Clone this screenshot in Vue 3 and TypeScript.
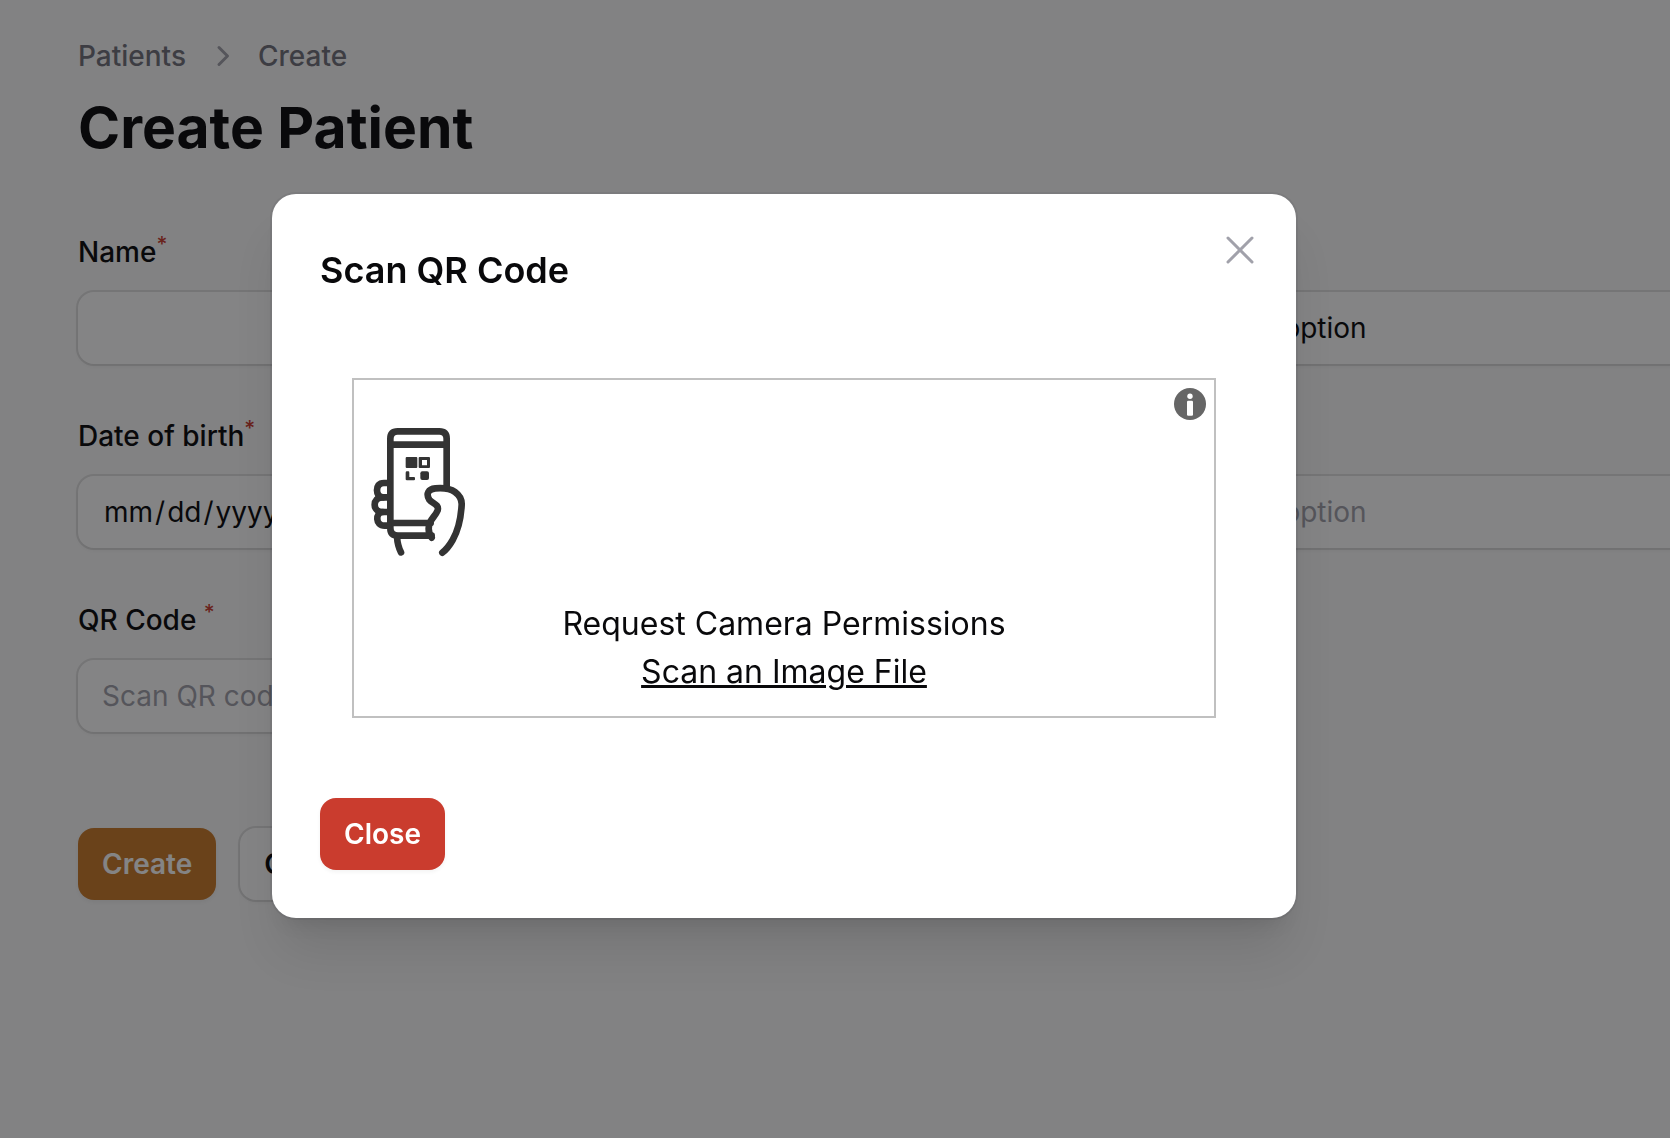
<script setup lang="ts">
import { ref } from 'vue'

const name = ref('')
const type = ref('')
const owner = ref('')
const birthDate = ref('')
const qrCode = ref('')
const scannerOpen = ref(true)
</script>

<template>
  <main class="page">
    <nav class="breadcrumbs" aria-label="Breadcrumb">
      <a href="#patients">Patients</a>
      <svg class="chevron" viewBox="0 0 40 40" aria-hidden="true">
        <path d="M17 11.5 25.5 20 17 28.5" />
      </svg>
      <a href="#create">Create</a>
    </nav>
    <h1 class="heading">Create Patient</h1>

    <form class="form" @submit.prevent>
      <div class="fields">
        <div class="field">
          <label for="name">Name<sup>*</sup></label>
          <input id="name" v-model="name" class="control" type="text" />
        </div>
        <div class="field">
          <label for="type">Type<sup>*</sup></label>
          <select id="type" v-model="type" class="control">
            <option value="">Select an option</option>
            <option value="cat">Cat</option>
            <option value="dog">Dog</option>
            <option value="rabbit">Rabbit</option>
          </select>
        </div>
        <div class="field">
          <label for="birth">Date of birth<sup>*</sup></label>
          <input id="birth" v-model="birthDate" class="control" type="date" />
        </div>
        <div class="field">
          <label for="owner">Owner<sup>*</sup></label>
          <select id="owner" v-model="owner" class="control muted">
            <option value="">Select an option</option>
          </select>
        </div>
        <div class="field">
          <label for="qr">QR Code <sup>*</sup></label>
          <input id="qr" v-model="qrCode" class="control" type="text" placeholder="Scan QR code" />
        </div>
      </div>
      <div class="actions">
        <button class="btn primary" type="submit">Create</button>
        <button class="btn outline" type="button">Create &amp; create another</button>
      </div>
    </form>
  </main>

  <div v-if="scannerOpen" class="overlay">
    <section class="modal" role="dialog" aria-modal="true" aria-labelledby="scan-title">
      <button class="dismiss" type="button" aria-label="Close dialog" @click="scannerOpen = false">
        <svg viewBox="0 0 48 48" aria-hidden="true"><path d="M12 12 36 36M36 12 12 36" /></svg>
      </button>
      <h2 id="scan-title" class="modal-title">Scan QR Code</h2>

      <div class="reader">
        <svg class="info" viewBox="0 0 32 32" aria-hidden="true">
          <circle cx="16" cy="16" r="16" fill="#666" />
          <circle cx="16" cy="8.3" r="2.7" fill="#fff" />
          <rect x="13" y="12.7" width="6" height="15" rx="1.2" fill="#fff" />
        </svg>
        <svg class="phone" viewBox="60 171 288 390" aria-hidden="true">
          <g class="strokes">
            <path d="M290 350V206Q290 184 268 184H143Q121 184 121 206V474Q121 497 144 497H245" />
            <path d="M121 224H290M121 459H242" />
            <path d="M114 339H102C86 339 81 349 81 361C81 374 87 382 100 382" />
            <path d="M114 382H98C66 382 66 426 98 426H114" />
            <path d="M98 426C76 428 75 467 104 467H116" />
            <path d="M141 500C142 517 146 534 153 547" />
            <path d="M245 503C236 490 233 474 240 457C247 443 258 434 263 421C268 403 247 401 238 389C227 371 235 357 256 355C278 353 300 355 315 366C330 377 336 389 335 405C333 440 325 480 308 510C300 524 290 538 277 548" />
          </g>
          <rect x="167" y="261" width="35" height="33" rx="3" />
          <path fill-rule="evenodd" d="M210 261H237Q240 261 240 264V291Q240 294 237 294H209Q206 294 206 291V264Q206 261 209 261ZM216 270V286H231V270Z" />
          <path d="M167 308Q167 304 171 304H175Q178 304 178 308V321H192Q195 321 195 324V328Q195 331 192 331H171Q167 331 167 328Z" />
          <rect x="211" y="304" width="26" height="26" rx="6" />
        </svg>
        <button class="reader-action" type="button">Request Camera Permissions</button>
        <a class="reader-action file" href="#file">Scan an Image File</a>
      </div>

      <button class="btn danger" type="button" @click="scannerOpen = false">Close</button>
    </section>
  </div>
</template>

<style>
body {
  background: #fafafa;
}
</style>

<style scoped>
.page,
.overlay {
  font-family: Inter, "Liberation Sans", sans-serif;
  font-size: 28px;
  line-height: 40px;
  color: #09090b;
}

.page {
  box-sizing: border-box;
  min-height: 100vh;
  padding: 36px 0 48px 78px;
  overflow: hidden;
  background: #fafafa;
}

.breadcrumbs {
  display: flex;
  align-items: center;
  gap: 16px;
}

.breadcrumbs a {
  color: #71717a;
  font-weight: 500;
  text-decoration: none;
}

.chevron {
  width: 40px;
  height: 40px;
  fill: none;
  stroke: #a1a1aa;
  stroke-width: 3;
  stroke-linecap: round;
  stroke-linejoin: round;
}

.heading {
  margin: 16px 0 64px;
  font-size: 57px;
  line-height: 72px;
  font-weight: 700;
}

/* The form runs on past the right edge of the window. */
.form {
  width: 129%;
}

.fields {
  display: grid;
  grid-template-columns: repeat(2, minmax(0, 1fr));
  gap: 48px;
}

.field {
  display: flex;
  flex-direction: column;
  gap: 16px;
}

.field label {
  font-weight: 500;
  line-height: 48px;
  white-space: pre-wrap;
}

sup {
  color: #ca3c2e;
  font-size: 21px;
  line-height: 0;
}

.control {
  box-sizing: border-box;
  width: 100%;
  height: 72px;
  padding: 0 24px;
  border: 0;
  border-radius: 16px;
  outline: 0;
  appearance: none;
  background: #fff;
  box-shadow: 0 0 0 2px rgba(9, 9, 11, 0.1), 0 2px 4px rgba(0, 0, 0, 0.05);
  color: #09090b;
  font: inherit;
}

.control::-webkit-datetime-edit-month-field,
.control::-webkit-datetime-edit-day-field,
.control::-webkit-datetime-edit-year-field {
  padding: 0 2px;
}

.control::placeholder,
.control.muted {
  color: #a1a1aa;
}

.actions {
  display: flex;
  gap: 24px;
  margin-top: 96px;
}

.btn {
  padding: 16px 24px;
  border: 0;
  border-radius: 16px;
  box-shadow: 0 2px 4px rgba(0, 0, 0, 0.05);
  color: #fff;
  font: inherit;
  font-weight: 600;
  cursor: pointer;
}

.primary {
  background: #cb7b29;
}

.outline {
  background: #fff;
  box-shadow: 0 0 0 2px rgba(9, 9, 11, 0.1), 0 2px 4px rgba(0, 0, 0, 0.05);
  color: #09090b;
}

.danger {
  background: #ca3c2e;
}

.overlay {
  position: fixed;
  inset: 0;
  display: flex;
  justify-content: center;
  align-items: flex-start;
  padding: 194px 102px 0 0;
  overflow: auto;
  background: rgba(9, 9, 11, 0.5);
}

.modal {
  position: relative;
  box-sizing: border-box;
  width: 100%;
  max-width: 1024px;
  padding: 48px;
  border-radius: 24px;
  background: #fff;
  box-shadow: 0 0 0 2px rgba(9, 9, 11, 0.05), 0 40px 50px -10px rgba(0, 0, 0, 0.1),
    0 16px 20px -12px rgba(0, 0, 0, 0.1);
}

.dismiss {
  position: absolute;
  top: 32px;
  right: 32px;
  width: 48px;
  height: 48px;
  padding: 0;
  border: 0;
  background: none;
  cursor: pointer;
}

.dismiss svg {
  display: block;
  fill: none;
  stroke: #a1a1aa;
  stroke-width: 3;
  stroke-linecap: round;
}

.modal-title {
  margin: 0 0 80px;
  font-size: 36px;
  line-height: 56px;
  font-weight: 600;
}

.reader {
  position: relative;
  display: flex;
  flex-direction: column;
  align-items: center;
  margin: 0 32px 80px;
  padding: 47px 16px 20px;
  border: 2px solid #c0c0c0;
}

.info {
  position: absolute;
  top: 8px;
  right: 8px;
  width: 32px;
  height: 32px;
}

.phone {
  align-self: flex-start;
  width: 96px;
  height: 130px;
  margin-bottom: 43px;
  fill: #333;
}

.strokes {
  fill: none;
  stroke: #333;
  stroke-width: 20;
  stroke-linecap: round;
  stroke-linejoin: round;
}

.reader-action {
  padding: 0;
  border: 0;
  background: none;
  color: #09090b;
  font: inherit;
  font-size: 32px;
  line-height: 48px;
  cursor: pointer;
}

.file {
  text-decoration: underline;
  text-decoration-thickness: 3px;
}
</style>
